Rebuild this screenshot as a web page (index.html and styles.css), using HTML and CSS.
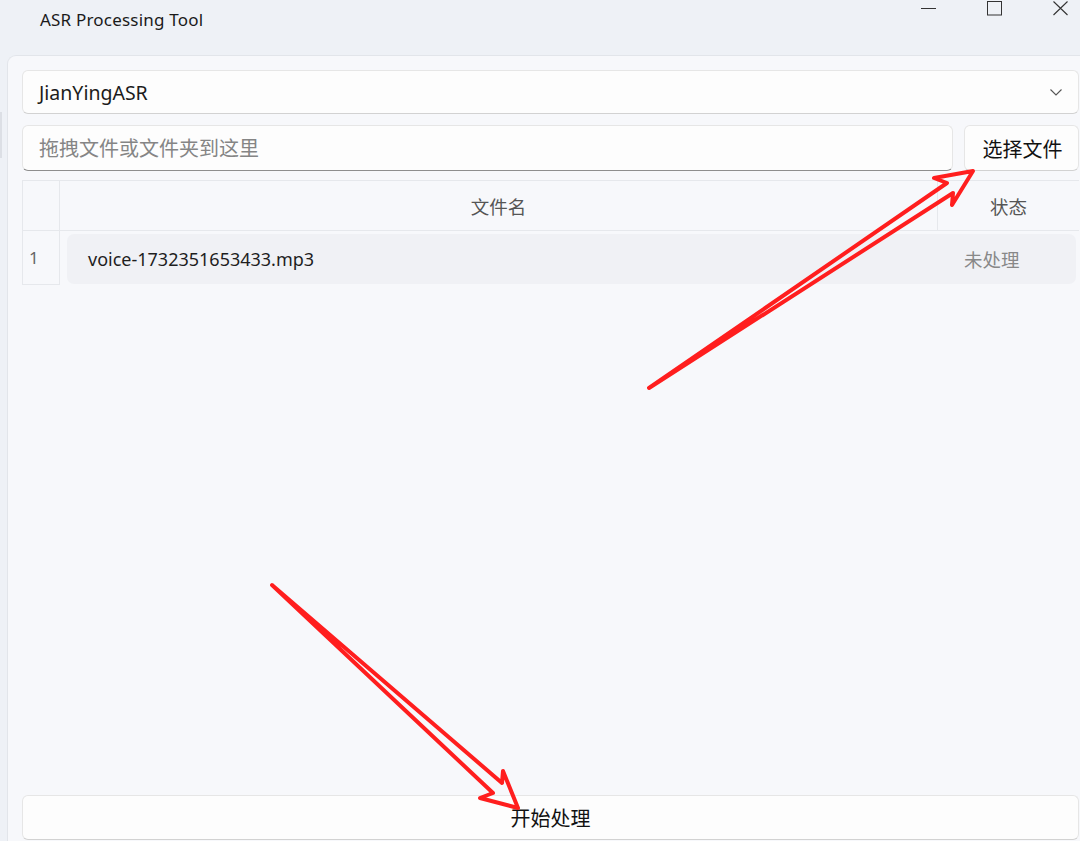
FILE: index.html
```html
<!DOCTYPE html>
<html lang="zh-CN">
<head>
    <meta charset="UTF-8">
    <title>ASR Processing Tool</title>
    <link rel="stylesheet" href="styles.css">
</head>
<body>
    <div class="titlebar">
        <span class="title">ASR Processing Tool</span>
        <div class="controls">
            <svg width="15" height="16" viewBox="0 0 15 16"><path d="M0 8.5H15" stroke="#333" stroke-width="1"/></svg>
            <svg width="15" height="16" viewBox="0 0 15 16"><rect x="0.5" y="1.5" width="14" height="13.5" fill="none" stroke="#333" stroke-width="1"/></svg>
            <svg width="15" height="16" viewBox="0 0 15 16"><path d="M0.5 1.5L14.5 15M14.5 1.5L0.5 15" stroke="#333" stroke-width="1.1"/></svg>
        </div>
    </div>

    <div class="main">
        <div class="edge"></div>
        <div class="panel">
            <div class="combo">
                <span>JianYingASR</span>
                <svg class="chevron" width="12" height="7" viewBox="0 0 12 7"><path d="M0.5 0.5L6 6L11.5 0.5" fill="none" stroke="#555" stroke-width="1.1"/></svg>
            </div>

            <div class="file-row">
                <input class="file-input" type="text" placeholder="拖拽文件或文件夹到这里">
                <button class="btn pick">选择文件</button>
            </div>

            <div class="table">
                <div class="thead">
                    <div class="corner"></div>
                    <div class="th">文件名</div>
                    <div class="th status">状态</div>
                </div>
                <div class="tr">
                    <div class="rownum">1</div>
                    <div class="cells">
                        <span class="fname">voice-1732351653433.mp3</span>
                        <span class="state">未处理</span>
                    </div>
                </div>
            </div>

            <button class="btn start">开始处理</button>
        </div>
    </div>

    <!-- annotation arrows drawn over the window -->
    <svg class="marks" width="1080" height="841" viewBox="0 0 1080 841">
        <polygon points="649,388 947,183 934,178 973,171 952,205 953,193" />
        <polygon points="272,585 502,783 503,771 518,808 480,798 493,793" />
    </svg>
</body>
</html>
```

FILE: styles.css
```css
* {
    margin: 0;
    padding: 0;
    box-sizing: border-box;
}

body {
    width: 1080px;
    height: 841px;
    overflow: hidden;
    position: relative;
    background: #eef1f6;
    font-family: 'Noto Sans', 'Noto Sans CJK SC', sans-serif;
    color: #1b1b1b;
}

.titlebar {
    height: 55px;
    display: flex;
    align-items: flex-start;
}

.title {
    margin: 8px 0 0 40px;
    font-size: 17px;
    line-height: 24px;
    letter-spacing: 0.2px;
    color: #1a1a1a;
}

.controls {
    margin-left: auto;
    display: flex;
    gap: 51px;
    padding-right: 12px;
}

.main {
    display: flex;
    height: 786px;
}

.edge {
    width: 2px;
    height: 46px;
    margin-top: 57px;
    background: #dcdfe5;
}

.panel {
    flex: 1;
    margin-left: 5px;
    display: flex;
    flex-direction: column;
    gap: 11px;
    padding: 14px 1px 1px 14px;
    background: #f7f8fb;
    border-top: 1px solid #e2e5ea;
    border-left: 1px solid #e2e5ea;
    border-top-left-radius: 9px;
}

.combo {
    height: 44px;
    display: flex;
    align-items: center;
    justify-content: space-between;
    padding: 0 16px;
    background: #fdfdfd;
    border: 1px solid #e6e6e6;
    border-bottom-color: #d2d2d2;
    border-radius: 6px;
    font-size: 19.5px;
}

.file-row {
    display: flex;
    gap: 11px;
    height: 46px;
}

.file-input {
    flex: 1;
    padding: 0 16px;
    background: #fdfdfd;
    border: 1px solid #e6e6e6;
    border-bottom: 1px solid #8e8e8e;
    border-radius: 6px;
    font-family: inherit;
    font-size: 20px;
    color: #1b1b1b;
    outline: none;
}

.file-input::placeholder {
    color: #858585;
}

.btn {
    background: #fdfdfd;
    border: 1px solid #e6e6e6;
    border-bottom-color: #d2d2d2;
    border-radius: 6px;
    font-family: inherit;
    font-size: 20px;
    color: #111;
}

.pick {
    width: 115px;
    padding-left: 2px;
}

.table {
    flex: 1;
    margin-top: -2px;
}

.thead {
    display: grid;
    grid-template-columns: 38px 1fr 142px;
    height: 51px;
    border-top: 1px solid #e6e8ec;
    border-bottom: 1px solid #e6e8ec;
}

.corner {
    border-left: 1px solid #e6e8ec;
    border-right: 1px solid #e6e8ec;
}

.th {
    display: flex;
    align-items: center;
    justify-content: center;
    font-size: 18.5px;
    color: #555;
}

.th.status {
    border-left: 1px solid #e6e8ec;
}

.tr {
    display: flex;
    height: 54px;
}

.rownum {
    width: 38px;
    padding-left: 6px;
    display: flex;
    align-items: center;
    border-left: 1px solid #e6e8ec;
    border-right: 1px solid #e6e8ec;
    border-bottom: 1px solid #e6e8ec;
    font-size: 17px;
    color: #666;
}

.cells {
    flex: 1;
    display: grid;
    grid-template-columns: 1fr 139px;
    align-items: center;
    margin: 3px 3px 1px 7px;
    background: #f0f1f5;
    border-radius: 7px;
}

.fname {
    padding-left: 21px;
    font-size: 18px;
    color: #1e1e1e;
}

.state {
    padding-left: 27px;
    font-size: 18.5px;
    color: #888;
}

.start {
    height: 45px;
}

.marks {
    position: absolute;
    top: 0;
    left: 0;
    pointer-events: none;
}

.marks polygon {
    fill: none;
    stroke: #ff1e1e;
    stroke-width: 4;
    stroke-linejoin: round;
}
```
